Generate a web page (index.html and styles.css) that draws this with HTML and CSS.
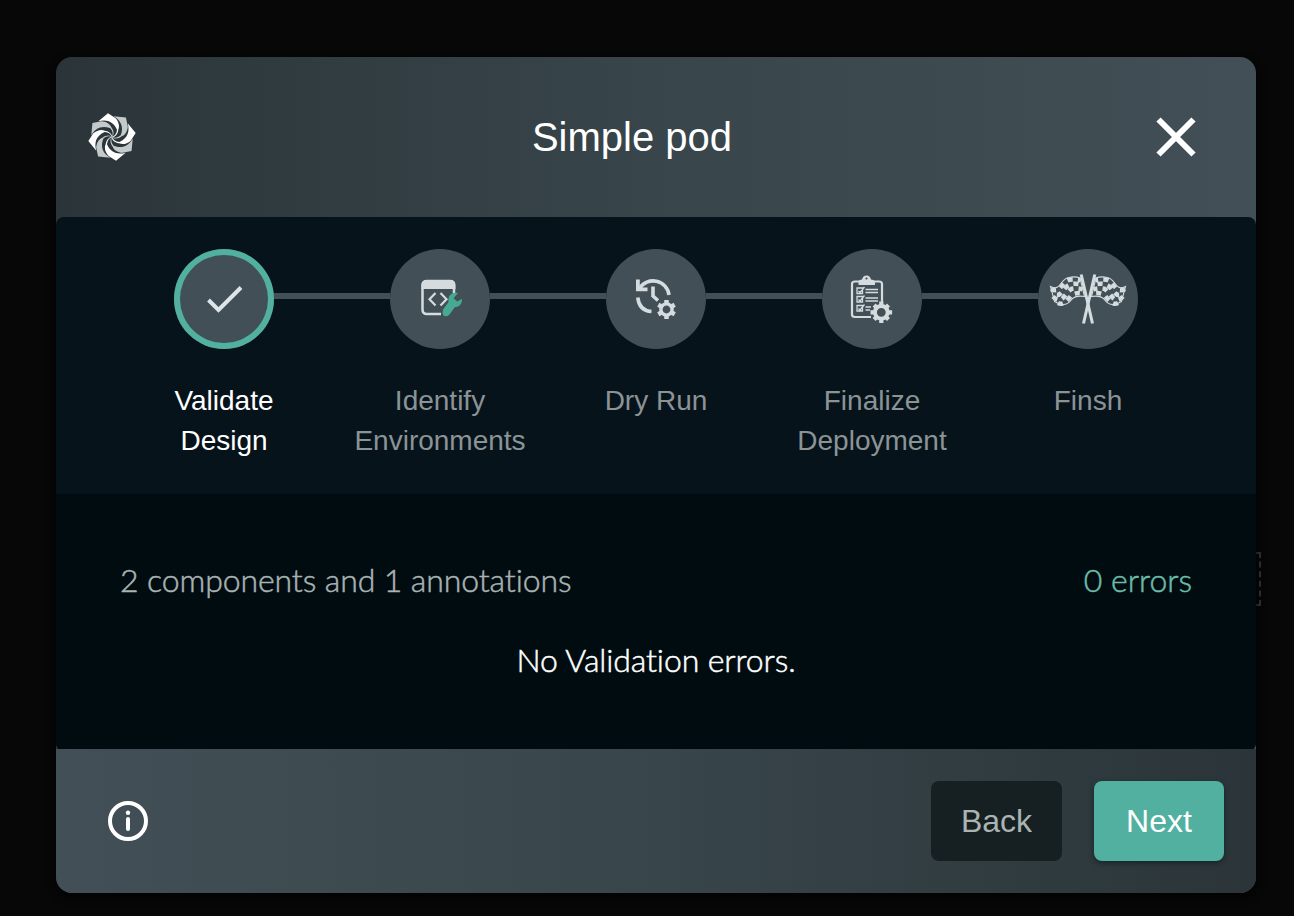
FILE: index.html
```html
<!DOCTYPE html>
<html lang="en">
<head>
<meta charset="utf-8">
<title>Simple pod</title>
<link rel="stylesheet" href="styles.css">
</head>
<body>
<div class="drop-outline"></div>
<main class="modal">
  <header class="modal-header">
    <svg class="logo" viewBox="-72 -72 144 144">
      <defs><path id="blade" d="M-12-71L-41-47C-18-54 4-48 15-22C14-10 8-3 0 0L2 1C12-2 18-12 19-22C24-32 20-46 11-56Z"/></defs>
      <g fill="#fff"><use href="#blade"/><use href="#blade" transform="rotate(90)"/><use href="#blade" transform="rotate(180)"/><use href="#blade" transform="rotate(270)"/></g>
      <g fill="#c4cacb"><use href="#blade" transform="rotate(45)"/><use href="#blade" transform="rotate(135)"/><use href="#blade" transform="rotate(225)"/><use href="#blade" transform="rotate(315)"/></g>
    </svg>
    <h1 class="title">Simple pod</h1>
    <svg class="close" viewBox="0 0 40 40"><path d="M2.500 2.500L37.500 37.500M37.500 2.500L2.500 37.500" stroke="#fff" stroke-width="6"/></svg>
  </header>

  <ol class="stepper">
    <li class="step active">
      <div class="node"><svg viewBox="0 0 100 100"><path d="M34.500 51L44.500 61L67 38.500" fill="none" stroke="#dce5ea" stroke-width="4"/></svg></div>
      <span class="label">Validate Design</span>
    </li>
    <li class="step">
      <div class="node"><svg viewBox="0 0 100 100">
        <path d="M51 65H37Q32.500 65 32.500 60.500V36.500Q32.500 32 37 32H60Q64 32 64 36.500V45" fill="none" stroke="#d4dce0" stroke-width="2.500"/>
        <path d="M31.500 40V36Q31.500 31 37 31H60Q65.500 31 65.500 36V40Z" fill="#d4dce0"/>
        <path d="M45.500 44L39.500 50.300L45.500 56.500M50.500 44L56.500 50.300L50.500 56.500" fill="none" stroke="#d4dce0" stroke-width="2.200"/>
        <path d="M66 43Q60 42.500 57.800 47.500Q57 50.500 58 53.500L53.800 61.500Q53 65 55.500 67.500Q59 68.500 61 65.500L65 57.500Q70.500 56 71 51.500V48L66.500 51.500L62.500 48.800Z" fill="#46aa93" transform="rotate(9 60 56)"/>
      </svg></div>
      <span class="label">Identify Environments</span>
    </li>
    <li class="step">
      <div class="node"><svg viewBox="0 0 100 100">
        <g fill="none" stroke="#d4dce0" stroke-width="3.600"><path d="M33.500 39.500A16 16 0 0 1 63 46M31.800 48.500Q33 61.500 45.500 62.500M47 37.500V47L52 51.500"/></g>
        <path d="M30 30.500H33.800V38.500H41.500V42.300H30Z" fill="#d4dce0"/>
        <g transform="translate(60.500 60.500)" fill="none" stroke="#d4dce0"><circle r="5.600" stroke-width="3.400"/><path d="M0-9.500V-6.500M0 9.500V6.500M8.200-4.800L5.500-3.300M-8.200 4.800L-5.500 3.300M8.200 4.800L5.500 3.300M-8.200-4.800L-5.500-3.300" stroke-width="4.500"/></g>
      </svg></div>
      <span class="label">Dry Run</span>
    </li>
    <li class="step">
      <div class="node"><svg viewBox="0 0 100 100">
        <path d="M49 68H33Q30 68 30 65.500V35Q30 32.500 33 32.500H57Q60 32.500 60 35V54" fill="none" stroke="#d4dce0" stroke-width="2.200"/>
        <path d="M36.500 36V32.500Q37 30.500 40 30.500Q41 26.500 44.500 26.500Q48 26.500 49 30.500Q52 30.500 53 32.500V36Z" fill="#d4dce0"/><circle cx="44.500" cy="29.500" r="1.100" fill="#424f56"/>
        <g fill="none" stroke="#d4dce0" stroke-width="1.300"><path d="M35 39H40.500V44.500H35ZM35 47.500H40.500V53H35ZM35 56.500H40.500V62H35ZM36.500 42L38 43.500L42.500 38M36.500 50.500L38 52L42.500 46.500M36.500 59.500L38 61L42.500 55.500M43.500 40.500H56M43.500 43.500H56M43.500 49H56M43.500 52H56M43.500 58H49M43.500 61H48"/></g>
        <g transform="translate(59.300 63.300)"><circle r="8.500" fill="#424f56"/><circle r="6.400" fill="none" stroke="#d4dce0" stroke-width="4"/><path d="M0-10.800V-7M0 10.800V7M10.800 0H7M-10.800 0H-7M7.200-7.200L5-5M-7.200 7.200L-5 5M7.200 7.200L5 5M-7.200-7.200L-5-5" stroke="#d4dce0" stroke-width="4.200"/></g>
      </svg></div>
      <span class="label">Finalize Deployment</span>
    </li>
    <li class="step">
      <div class="node"><svg viewBox="0 0 100 100">
        <defs>
          <g id="flag" fill="none" stroke="#d4dce0">
            <path d="M12.500 37.500C23 43 22 29.500 31 28.500Q37 27 42 29L46.500 47.500Q38 46 34 50C30 56 25 58 16.500 52.500Z" stroke-width="1.100"/>
            <g stroke-width="4.500" stroke-dasharray="5.200 5.200">
              <path d="M13 40C23.500 45.500 23 32 31.500 30.800Q37 30 42.500 31.300"/>
              <path d="M14 44C24 51 24.500 37.500 32.500 35.300Q38 34 43.500 35.800" stroke-dashoffset="5.200"/>
              <path d="M15 47.500C24 57 27 44 33.500 39.800Q39 38.500 44.500 40.300"/>
              <path d="M16 50.500C24 60 29 51.500 34 45.500Q40 43 45.500 44.800" stroke-dashoffset="5.200"/>
            </g>
            <path d="M43.200 25.500L54.500 74.500" stroke-width="3"/>
          </g>
        </defs>
        <use href="#flag"/><use href="#flag" transform="matrix(-1 0 0 1 100 0)"/>
      </svg></div>
      <span class="label">Finsh</span>
    </li>
  </ol>

  <section class="results">
    <div class="summary"><span class="counts">2 components and 1 annotations</span><span class="errors">0 errors</span></div>
    <p class="message">No Validation errors.</p>
  </section>

  <footer class="modal-footer">
    <svg class="info" viewBox="0 0 40 40"><circle cx="20" cy="20" r="18" fill="none" stroke="#fff" stroke-width="4"/><circle cx="20" cy="11.700" r="2.200" fill="#fff"/><path d="M20 18V28" stroke="#fff" stroke-width="4" stroke-linecap="round"/></svg>
    <div class="actions"><button class="btn back">Back</button><button class="btn next">Next</button></div>
  </footer>
</main>
</body>
</html>
```
FILE: styles.css
```css
* { box-sizing: border-box; }
body {
  margin: 0;
  width: 1294px;
  height: 916px;
  overflow: hidden;
  padding: 57px 0 0 56px;
  background: #070707;
  font-family: "Liberation Sans", Arial, sans-serif;
}
.drop-outline {
  position: absolute;
  left: 1200px;
  top: 552px;
  width: 61px;
  height: 54px;
  border: 2px dashed #343838;
}
.modal {
  position: relative;
  width: 1200px;
  height: 836px;
  display: flex;
  flex-direction: column;
  border-radius: 16px;
  overflow: hidden;
  background: linear-gradient(90deg, #2b3539, #38454a 50%, #424f56);
  box-shadow: 0 4px 10px #030303;
}
.modal-header {
  height: 160px;
  display: grid;
  grid-template-columns: 48px 1fr 40px;
  align-items: center;
  padding: 0 60px 0 32px;
}
.logo { width: 48px; height: 48px; }
.title {
  margin: 0;
  padding-right: 28px;
  text-align: center;
  color: #fff;
  font-size: 40px;
  font-weight: 400;
  line-height: 60px;
}
.close { width: 40px; height: 40px; }
.stepper {
  height: 277px;
  margin: 0;
  padding: 32px 60px 0;
  display: grid;
  grid-template-columns: repeat(5, 216px);
  list-style: none;
  background: #06131a;
  border-radius: 8px 8px 0 0;
}
.step {
  position: relative;
  display: flex;
  flex-direction: column;
  align-items: center;
  gap: 32px;
  color: #8b9397;
}
.step + .step::before {
  content: "";
  position: absolute;
  top: 44px;
  left: -58px;
  width: 116px;
  height: 6px;
  background: #424f56;
}
.node {
  width: 100px;
  height: 100px;
  border-radius: 50%;
  background: #424f56;
}
.node svg { display: block; width: 100px; height: 100px; }
.active { color: #fff; }
.active .node { box-shadow: inset 0 0 0 6px #51b09f; }
.label {
  width: 184px;
  text-align: center;
  font-size: 28px;
  line-height: 40px;
}
.results {
  height: 256px;
  margin-bottom: -1px;
  padding: 62px 64px 0;
  background: #000c10;
  border-radius: 0 0 6px 6px;
  color: #a8b3b3;
  font-family: Lato, sans-serif;
  font-size: 32px;
  font-weight: 300;
  line-height: 48px;
  font-variant-ligatures: none;
  -webkit-text-stroke: .5px currentColor;
}
.summary { display: flex; justify-content: space-between; }
.counts { letter-spacing: -.1px; }
.errors { color: #6bbdaa; }
.message { margin: 32px 0 0; text-align: center; color: #fff; letter-spacing: -.1px; }
.modal-footer {
  flex: 1;
  display: flex;
  align-items: center;
  justify-content: space-between;
  padding: 0 32px 0 52px;
  background: linear-gradient(90deg, #424f56, #38454a 50%, #2b3539);
}
.info { width: 40px; height: 40px; }
.actions { display: flex; gap: 32px; }
.btn {
  height: 80px;
  width: 130px;
  padding: 0;
  border: 0;
  border-radius: 8px;
  font: 32px/56px "Liberation Sans", Arial, sans-serif;
}
.back { width: 131px; color: #abb3b3; background: #162022; }
.next { color: #fff; background: #51b09f; box-shadow: 0 2px 5px #142427; }
```
